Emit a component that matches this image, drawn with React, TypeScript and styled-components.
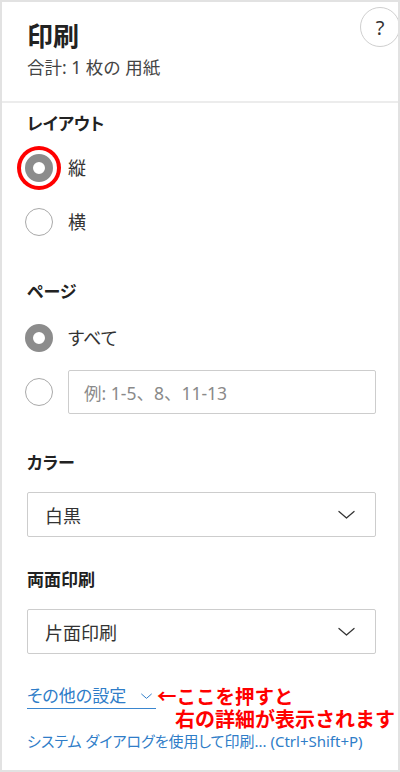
import React from "react";
import styled, { createGlobalStyle } from "styled-components";

const Global = createGlobalStyle`
  html, body { margin: 0; padding: 0; background: #fff; }
  body {
    font-family: "Noto Sans", "Noto Sans CJK JP", sans-serif;
    font-feature-settings: "palt";
    color: #222;
  }
  * { box-sizing: border-box; }
`;

const Frame = styled.div`
  position: relative;
  width: 400px;
  height: 772px;
  border: 2px solid #e2e2e2;
  background: #fff;
  overflow: hidden;
  display: flex;
  flex-direction: column;
`;

const Header = styled.header`
  height: 101px;
  border-bottom: 2px solid #ececec;
  display: flex;
  justify-content: space-between;
  align-items: flex-start;
  padding: 0 0 0 25px;
`;

const HeaderText = styled.div`
  display: flex;
  flex-direction: column;
  padding-top: 17px;
`;

const Title = styled.h1`
  margin: 0;
  font-family: "Noto Sans CJK JP", sans-serif;
  font-size: 26px;
  line-height: 32px;
  font-weight: 700;
  color: #222;
`;

const Subtitle = styled.div`
  margin-top: 4px;
  font-size: 17.5px;
  line-height: 24px;
  font-feature-settings: normal;
  color: #444;
`;

const HelpButton = styled.div`
  width: 40px;
  height: 40px;
  margin-top: 5px;
  margin-right: -2px;
  border: 1px solid #cfcfcf;
  border-radius: 50%;
  display: flex;
  align-items: center;
  justify-content: center;
  font-family: "Noto Sans", sans-serif;
  font-size: 20px;
  color: #333;
`;

const Body = styled.div`
  display: flex;
  flex-direction: column;
  padding: 0 22px 0 25px;
`;

const Label = styled.div<{ $top: number }>`
  margin-top: ${(p) => p.$top}px;
  font-size: 17px;
  line-height: 24px;
  font-weight: 700;
  color: #222;
`;

const RadioRow = styled.div<{ $top: number }>`
  margin-top: ${(p) => p.$top}px;
  height: 44px;
  display: flex;
  align-items: center;
  gap: 15px;
`;

const Radio = styled.span<{ $checked?: boolean; $highlight?: boolean }>`
  flex: none;
  width: 28px;
  height: 28px;
  margin-left: -2px;
  border-radius: 50%;
  background: #fff;
  border: ${(p) => (p.$checked ? "8px solid #8c8c8c" : "1.5px solid #a9a9a9")};
  box-shadow: ${(p) => (p.$highlight ? "0 0 0 4px #fff, 0 0 0 8px #f00" : "none")};
`;

const OptionText = styled.span`
  font-size: 18px;
  line-height: 24px;
  color: #333;
`;

const TextBox = styled.div`
  flex: 1;
  height: 44px;
  border: 1px solid #cdcdcd;
  border-radius: 2px;
  display: flex;
  align-items: center;
  padding-left: 15px;
  font-size: 17.5px;
  font-feature-settings: normal;
  color: #8a8a8a;
`;

const Select = styled.div<{ $top: number }>`
  margin-top: ${(p) => p.$top}px;
  height: 45px;
  border: 1px solid #cdcdcd;
  border-radius: 2px;
  display: flex;
  align-items: center;
  justify-content: space-between;
  padding: 0 20px 0 17px;
  font-size: 18px;
  color: #333;
`;

const LinkRow = styled.div`
  position: relative;
  margin-top: 30px;
  height: 25px;
  display: flex;
  align-items: flex-start;
`;

const MoreLink = styled.a`
  display: inline-flex;
  align-items: center;
  gap: 15px;
  padding-right: 4px;
  height: 25px;
  border-bottom: 1.5px solid #3a86cf;
  font-size: 17px;
  line-height: 22px;
  color: #2f7dc8;
  text-decoration: none;
`;

const Annotation = styled.div`
  position: absolute;
  left: 130px;
  top: 0;
  display: flex;
  flex-direction: column;
  font-family: "Noto Sans CJK JP", sans-serif;
  font-feature-settings: normal;
  color: #f00;
  font-weight: 700;
  font-size: 19.5px;
  line-height: 23px;
  white-space: nowrap;
`;

const AnnotationIndent = styled.span`
  padding-left: 18px;
  font-size: 20px;
`;

const SystemLink = styled.a`
  margin-top: 22px;
  font-size: 15px;
  line-height: 20px;
  color: #2f7dc8;
  text-decoration: none;
  white-space: nowrap;
`;

const Chevron = ({ size = 17, color = "#333", weight = 1.3 }: { size?: number; color?: string; weight?: number }) => (
  <svg width={size} height={size / 2 + 1} viewBox="0 0 18 10" fill="none">
    <path d="M1 1.5 L9 8.5 L17 1.5" stroke={color} strokeWidth={weight} strokeLinecap="round" strokeLinejoin="round" />
  </svg>
);

export default function App() {
  return (
    <>
      <Global />
      <Frame>
        <Header>
          <HeaderText>
            <Title>印刷</Title>
            <Subtitle>合計: 1 枚の 用紙</Subtitle>
          </HeaderText>
          <HelpButton>?</HelpButton>
        </Header>
        <Body>
          <Label $top={9}>レイアウト</Label>
          <RadioRow $top={10}>
            <Radio $checked $highlight />
            <OptionText>縦</OptionText>
          </RadioRow>
          <RadioRow $top={10}>
            <Radio />
            <OptionText>横</OptionText>
          </RadioRow>

          <Label $top={36}>ページ</Label>
          <RadioRow $top={12}>
            <Radio $checked />
            <OptionText>すべて</OptionText>
          </RadioRow>
          <RadioRow $top={10}>
            <Radio />
            <TextBox>例: 1-5、8、11-13</TextBox>
          </RadioRow>

          <Label $top={37}>カラー</Label>
          <Select $top={17}>
            <span>白黒</span>
            <Chevron />
          </Select>

          <Label $top={31}>両面印刷</Label>
          <Select $top={17}>
            <span>片面印刷</span>
            <Chevron />
          </Select>

          <LinkRow>
            <MoreLink href="#">
              その他の設定
              <Chevron size={11} color="#2f7dc8" weight={1.6} />
            </MoreLink>
            <Annotation>
              <span>←ここを押すと</span>
              <AnnotationIndent>右の詳細が表示されます</AnnotationIndent>
            </Annotation>
          </LinkRow>
          <SystemLink href="#">システム ダイアログを使用して印刷... (Ctrl+Shift+P)</SystemLink>
        </Body>
      </Frame>
    </>
  );
}
